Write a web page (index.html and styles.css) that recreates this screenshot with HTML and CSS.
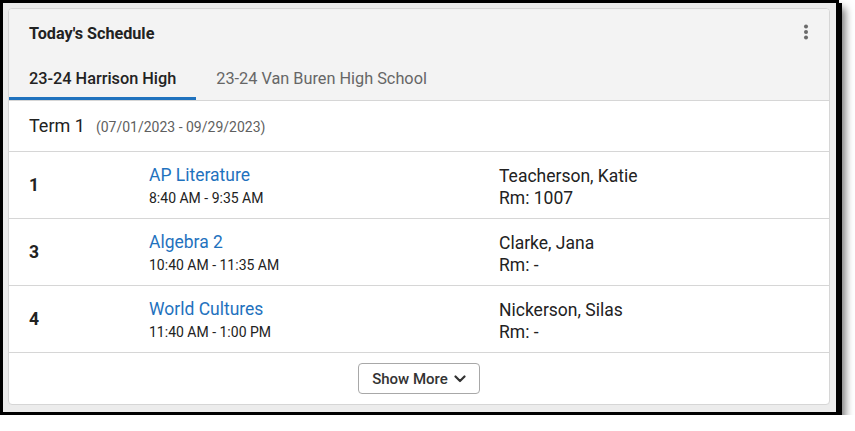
FILE: index.html
```html
<!DOCTYPE html>
<html>
    <head>
        <title>Today's Schedule</title>
        <link rel="stylesheet" href="styles.css">
    </head>
    <body>
        <div class="frame">
            <div class="card">
                <div class="card-header">
                    <div class="title-row">
                        <h2>Today's Schedule</h2>
                        <button class="menu-btn" aria-label="More options">
                            <svg viewBox="0 0 6 18" width="6" height="18" aria-hidden="true">
                                <circle cx="3" cy="3.5" r="2" />
                                <circle cx="3" cy="9" r="2" />
                                <circle cx="3" cy="14.5" r="2" />
                            </svg>
                        </button>
                    </div>
                    <div class="tabs">
                        <div class="tab active">23-24 Harrison High</div>
                        <div class="tab">23-24 Van Buren High School</div>
                    </div>
                </div>

                <div class="term">
                    <span class="term-name">Term 1</span>
                    <span class="term-dates">(07/01/2023 - 09/29/2023)</span>
                </div>

                <div class="period">
                    <div class="period-num">1</div>
                    <div class="course">
                        <a href="#" class="course-name">AP Literature</a>
                        <div class="course-time">8:40 AM - 9:35 AM</div>
                    </div>
                    <div class="teacher">
                        <div>Teacherson, Katie</div>
                        <div>Rm: 1007</div>
                    </div>
                </div>

                <div class="period">
                    <div class="period-num">3</div>
                    <div class="course">
                        <a href="#" class="course-name">Algebra 2</a>
                        <div class="course-time">10:40 AM - 11:35 AM</div>
                    </div>
                    <div class="teacher">
                        <div>Clarke, Jana</div>
                        <div>Rm: -</div>
                    </div>
                </div>

                <div class="period">
                    <div class="period-num">4</div>
                    <div class="course">
                        <a href="#" class="course-name">World Cultures</a>
                        <div class="course-time">11:40 AM - 1:00 PM</div>
                    </div>
                    <div class="teacher">
                        <div>Nickerson, Silas</div>
                        <div>Rm: -</div>
                    </div>
                </div>

                <div class="card-footer">
                    <button class="show-more">
                        Show More
                        <svg viewBox="0 0 12 8" width="12" height="8" aria-hidden="true">
                            <path d="M1.5 1.5 6 6l4.5-4.5" />
                        </svg>
                    </button>
                </div>
            </div>
        </div>
    </body>
</html>
```

FILE: styles.css
```css
:root {
    --text-primary: #222222;
    --text-secondary: #5f5f5f;
    --link-blue: #1f72be;
    --border: #d6d6d6;
    --header-bg: #f3f3f3;
}

body {
    margin: 0;
    background-color: #ffffff;
    font-family: Roboto, 'Liberation Sans', sans-serif;
    color: var(--text-primary);
}

.frame {
    width: 822px;
    padding: 5px 6px 7px 5px;
    background-color: #ececec;
    border: 3px solid #000000;
    box-shadow: 3px 3px 0 #000000, 6px 8px 8px rgba(0, 0, 0, 0.55);
}

.card {
    background-color: #ffffff;
    border: 1px solid var(--border);
    border-radius: 4px;
    overflow: hidden;
}

.card-header {
    background-color: var(--header-bg);
    border-bottom: 1px solid var(--border);
}

.title-row {
    display: flex;
    align-items: center;
    justify-content: space-between;
    height: 48px;
    padding: 0 20px 0 20px;
}

h2 {
    margin: 0;
    font-size: 16.2px;
    font-weight: 700;
}

.menu-btn {
    background: none;
    border: none;
    padding: 0;
    margin-top: -2px;
    display: flex;
    fill: #6a6a6a;
}

.tabs {
    display: flex;
    height: 43px;
}

.tab {
    padding: 0 20px;
    font-size: 16.3px;
    color: #666666;
    line-height: 43px;
    border-bottom: 3px solid transparent;
}

.tab.active {
    color: var(--text-primary);
    font-weight: 500;
    border-bottom-color: #1f72be;
}

.term {
    display: flex;
    align-items: baseline;
    height: 50px;
    line-height: 50px;
    padding: 0 20px;
    border-bottom: 1px solid var(--border);
}

.term-name {
    font-size: 18px;
}

.term-dates {
    margin-left: 11px;
    font-size: 14px;
    color: var(--text-secondary);
}

.period {
    display: grid;
    grid-template-columns: 120px 350px 1fr;
    align-items: center;
    height: 66px;
    padding: 0 20px;
    border-bottom: 1px solid var(--border);
}

.period-num {
    font-size: 17.5px;
    font-weight: 700;
}

.course {
    padding-top: 3px;
}

.course-name {
    display: block;
    font-size: 17.5px;
    line-height: 22px;
    color: var(--link-blue);
    text-decoration: none;
}

.course-time {
    font-size: 14px;
    line-height: 24px;
}

.teacher {
    padding-top: 3px;
    font-size: 17.5px;
    line-height: 22px;
}

.card-footer {
    display: flex;
    justify-content: center;
    align-items: center;
    height: 51px;
}

.show-more {
    display: flex;
    align-items: center;
    gap: 6px;
    height: 31px;
    padding: 0 13px;
    background-color: #ffffff;
    border: 1px solid #a8a8a8;
    border-radius: 4px;
    font-family: inherit;
    font-size: 15px;
    font-weight: 500;
    color: #333333;
}

.show-more svg {
    fill: none;
    stroke: #333333;
    stroke-width: 2.2;
    stroke-linecap: round;
    stroke-linejoin: round;
}
```
